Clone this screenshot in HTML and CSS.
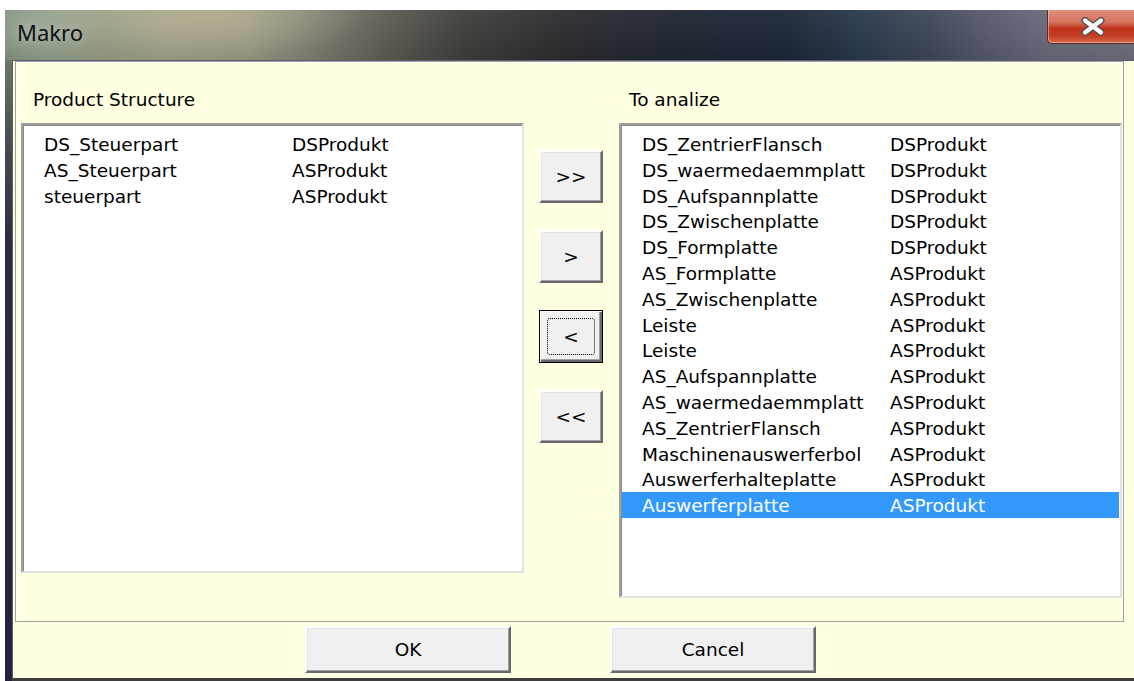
FILE: index.html
```html
<!DOCTYPE html>
<html lang="de">
<head>
<meta charset="utf-8">
<title>Makro</title>
<link rel="stylesheet" href="styles.css">
</head>
<body>
<div class="window">
  <div class="titlebar">
    <span class="title">Makro</span>
    <button class="close" type="button" aria-label="Schließen">
      <svg width="26" height="19" viewBox="0 0 26 19">
        <path d="M5 3.5 L21 15.5 M21 3.5 L5 15.5" stroke="#505050" stroke-width="7" stroke-linecap="round" fill="none"/>
        <path d="M5 3.5 L21 15.5 M21 3.5 L5 15.5" stroke="#ffffff" stroke-width="4.2" stroke-linecap="round" fill="none"/>
      </svg>
    </button>
  </div>
  <div class="frame">
    <div class="frame-edge"></div>
    <div class="client">
      <div class="panel">
        <div class="col col-left">
          <div class="label">Product Structure</div>
          <div class="listbox listbox-left">
            <div class="row"><span>DS_Steuerpart</span><span>DSProdukt</span></div>
            <div class="row"><span>AS_Steuerpart</span><span>ASProdukt</span></div>
            <div class="row"><span>steuerpart</span><span>ASProdukt</span></div>
          </div>
        </div>
        <div class="movers">
          <button class="btn mover" type="button">&gt;&gt;</button>
          <button class="btn mover" type="button">&gt;</button>
          <button class="btn mover focused" type="button"><span class="focus-ring">&lt;</span></button>
          <button class="btn mover" type="button">&lt;&lt;</button>
        </div>
        <div class="col col-right">
          <div class="label label-right">To analize</div>
          <div class="listbox listbox-right">
            <div class="row"><span>DS_ZentrierFlansch</span><span>DSProdukt</span></div>
            <div class="row"><span>DS_waermedaemmplatt</span><span>DSProdukt</span></div>
            <div class="row"><span>DS_Aufspannplatte</span><span>DSProdukt</span></div>
            <div class="row"><span>DS_Zwischenplatte</span><span>DSProdukt</span></div>
            <div class="row"><span>DS_Formplatte</span><span>DSProdukt</span></div>
            <div class="row"><span>AS_Formplatte</span><span>ASProdukt</span></div>
            <div class="row"><span>AS_Zwischenplatte</span><span>ASProdukt</span></div>
            <div class="row"><span>Leiste</span><span>ASProdukt</span></div>
            <div class="row"><span>Leiste</span><span>ASProdukt</span></div>
            <div class="row"><span>AS_Aufspannplatte</span><span>ASProdukt</span></div>
            <div class="row"><span>AS_waermedaemmplatt</span><span>ASProdukt</span></div>
            <div class="row"><span>AS_ZentrierFlansch</span><span>ASProdukt</span></div>
            <div class="row"><span>Maschinenauswerferbol</span><span>ASProdukt</span></div>
            <div class="row"><span>Auswerferhalteplatte</span><span>ASProdukt</span></div>
            <div class="row selected"><span>Auswerferplatte</span><span>ASProdukt</span></div>
          </div>
        </div>
      </div>
      <div class="footer">
        <button class="btn action" type="button">OK</button>
        <button class="btn action" type="button">Cancel</button>
      </div>
    </div>
  </div>
</div>
</body>
</html>
```
FILE: styles.css
```css
html, body {
  margin: 0;
  padding: 0;
  background: #ffffff;
}

body {
  width: 1134px;
  height: 681px;
  overflow: hidden;
  font-family: "DejaVu Sans", Verdana, sans-serif;
  font-size: 18.5px;
  color: #000;
}

.window {
  margin: 10px 0 0 5px;
  width: 1129px;
  height: 671px;
  display: flex;
  flex-direction: column;
}

/* Aero glass caption */
.titlebar {
  height: 50px;
  flex: none;
  display: flex;
  justify-content: space-between;
  align-items: flex-start;
  background:
    radial-gradient(ellipse 160px 40px at 200px 8px, rgba(190, 186, 150, 0.55), rgba(190, 186, 150, 0) 100%),
    radial-gradient(ellipse 70px 40px at 30px 20px, rgba(200, 215, 200, 0.35), rgba(200, 215, 200, 0) 100%),
    linear-gradient(180deg, rgba(255, 255, 255, 0.05) 0%, rgba(0, 0, 0, 0.08) 100%),
    linear-gradient(90deg, #7d8c7a 0px, #939d88 70px, #a3a18a 160px, #9e9b86 240px, #858276 300px, #5f5c54 380px, #3f3e3b 460px, #2b2c2f 560px, #1e2531 680px, #1c2637 780px, #2b3a4c 860px, #3d4656 920px, #56596a 980px, #686a7a 1040px, #6e6e7e 1129px);
}

.title {
  font-family: "Noto Sans", "Open Sans", sans-serif;
  font-size: 22px;
  line-height: 30px;
  color: #0e1216;
  margin: 7px 0 0 12px;
  text-shadow: 0 0 8px rgba(255, 255, 255, 0.35);
}

.close {
  width: 87px;
  height: 34px;
  margin: 0;
  padding: 0 0 0 4px;
  border: 1px solid #5b2b26;
  border-top: none;
  border-right: none;
  border-bottom-left-radius: 5px;
  background: linear-gradient(180deg, #e0907f 0%, #d6715c 38%, #c0331c 55%, #c23c26 78%, #d96a4a 100%);
  box-shadow: inset 1px -1px 0 rgba(255, 230, 220, 0.45);
  display: flex;
  align-items: center;
  justify-content: center;
}

.close svg {
  display: block;
}

.frame {
  flex: 1;
  display: flex;
}

.frame-edge {
  width: 7px;
  flex: none;
  background: linear-gradient(180deg, #6b7868 0%, #4a5052 12%, #2a2b44 30%, #222240 100%);
}

.client {
  flex: 1;
  display: flex;
  flex-direction: column;
  background: #ffffe1;
  border-top: 1px solid #5e5e66;
  border-left: 1px solid #5e5e66;
  border-bottom: 3px solid #3e3e3e;
  padding-left: 2px;
}

.panel {
  width: 1109px;
  height: 561px;
  box-sizing: border-box;
  border: 1px solid #a0a0a0;
  box-shadow: inset 1px 1px 0 #ffffff;
  display: grid;
  grid-template-columns: 5px 503px 15px 64px 16px 503px 1px;
  align-items: start;
}

.col-left {
  grid-column: 2;
}

.movers {
  grid-column: 4;
  display: flex;
  flex-direction: column;
  gap: 27px;
  padding-top: 88px;
}

.col-right {
  grid-column: 6;
}

.label {
  height: 61px;
  box-sizing: border-box;
  padding: 27px 0 0 12px;
  line-height: 22px;
}

.label-right {
  padding-left: 10px;
}

/* sunken list boxes */
.listbox {
  box-sizing: border-box;
  background: #ffffff;
  border: 2px solid;
  border-color: #a0a0a0 #e3e3e3 #e3e3e3 #a0a0a0;
  box-shadow: inset 1px 1px 0 #8a8a8a;
  padding: 6px 1px 0 1px;
}

.listbox-left {
  height: 450px;
}

.listbox-right {
  height: 475px;
}

.row {
  display: grid;
  grid-template-columns: 248px 1fr;
  box-sizing: border-box;
  height: 25.8px;
  padding: 2px 0 0 20px;
  line-height: 23.8px;
  white-space: nowrap;
}

.row.selected {
  background: #3399ff;
  color: #ffffff;
}

/* classic 3D push buttons */
.btn {
  box-sizing: border-box;
  font-family: "DejaVu Sans", Verdana, sans-serif;
  font-size: 18.5px;
  color: #000;
  background: #f0f0f0;
  border: 2px solid;
  border-color: #ffffff #696969 #696969 #ffffff;
  box-shadow: inset -1px -1px 0 #a0a0a0, inset 1px 1px 0 #e3e3e3;
  padding: 0;
  margin: 0;
  display: flex;
  align-items: center;
  justify-content: center;
}

.mover {
  width: 64px;
  height: 53px;
}

.mover.focused {
  border: 1px solid #000;
  box-shadow: inset 1px 1px 0 #ffffff, inset -2px -2px 0 #696969, inset -3px -3px 0 #a0a0a0;
}

.focus-ring {
  width: 48px;
  height: 37px;
  box-sizing: border-box;
  border: 1px dotted #000;
  border-radius: 3px;
  display: flex;
  align-items: center;
  justify-content: center;
}

.footer {
  flex: 1;
  display: flex;
  align-items: flex-start;
  gap: 99px;
  padding: 4px 0 0 290px;
}

.action {
  width: 206px;
  height: 47px;
}
```
